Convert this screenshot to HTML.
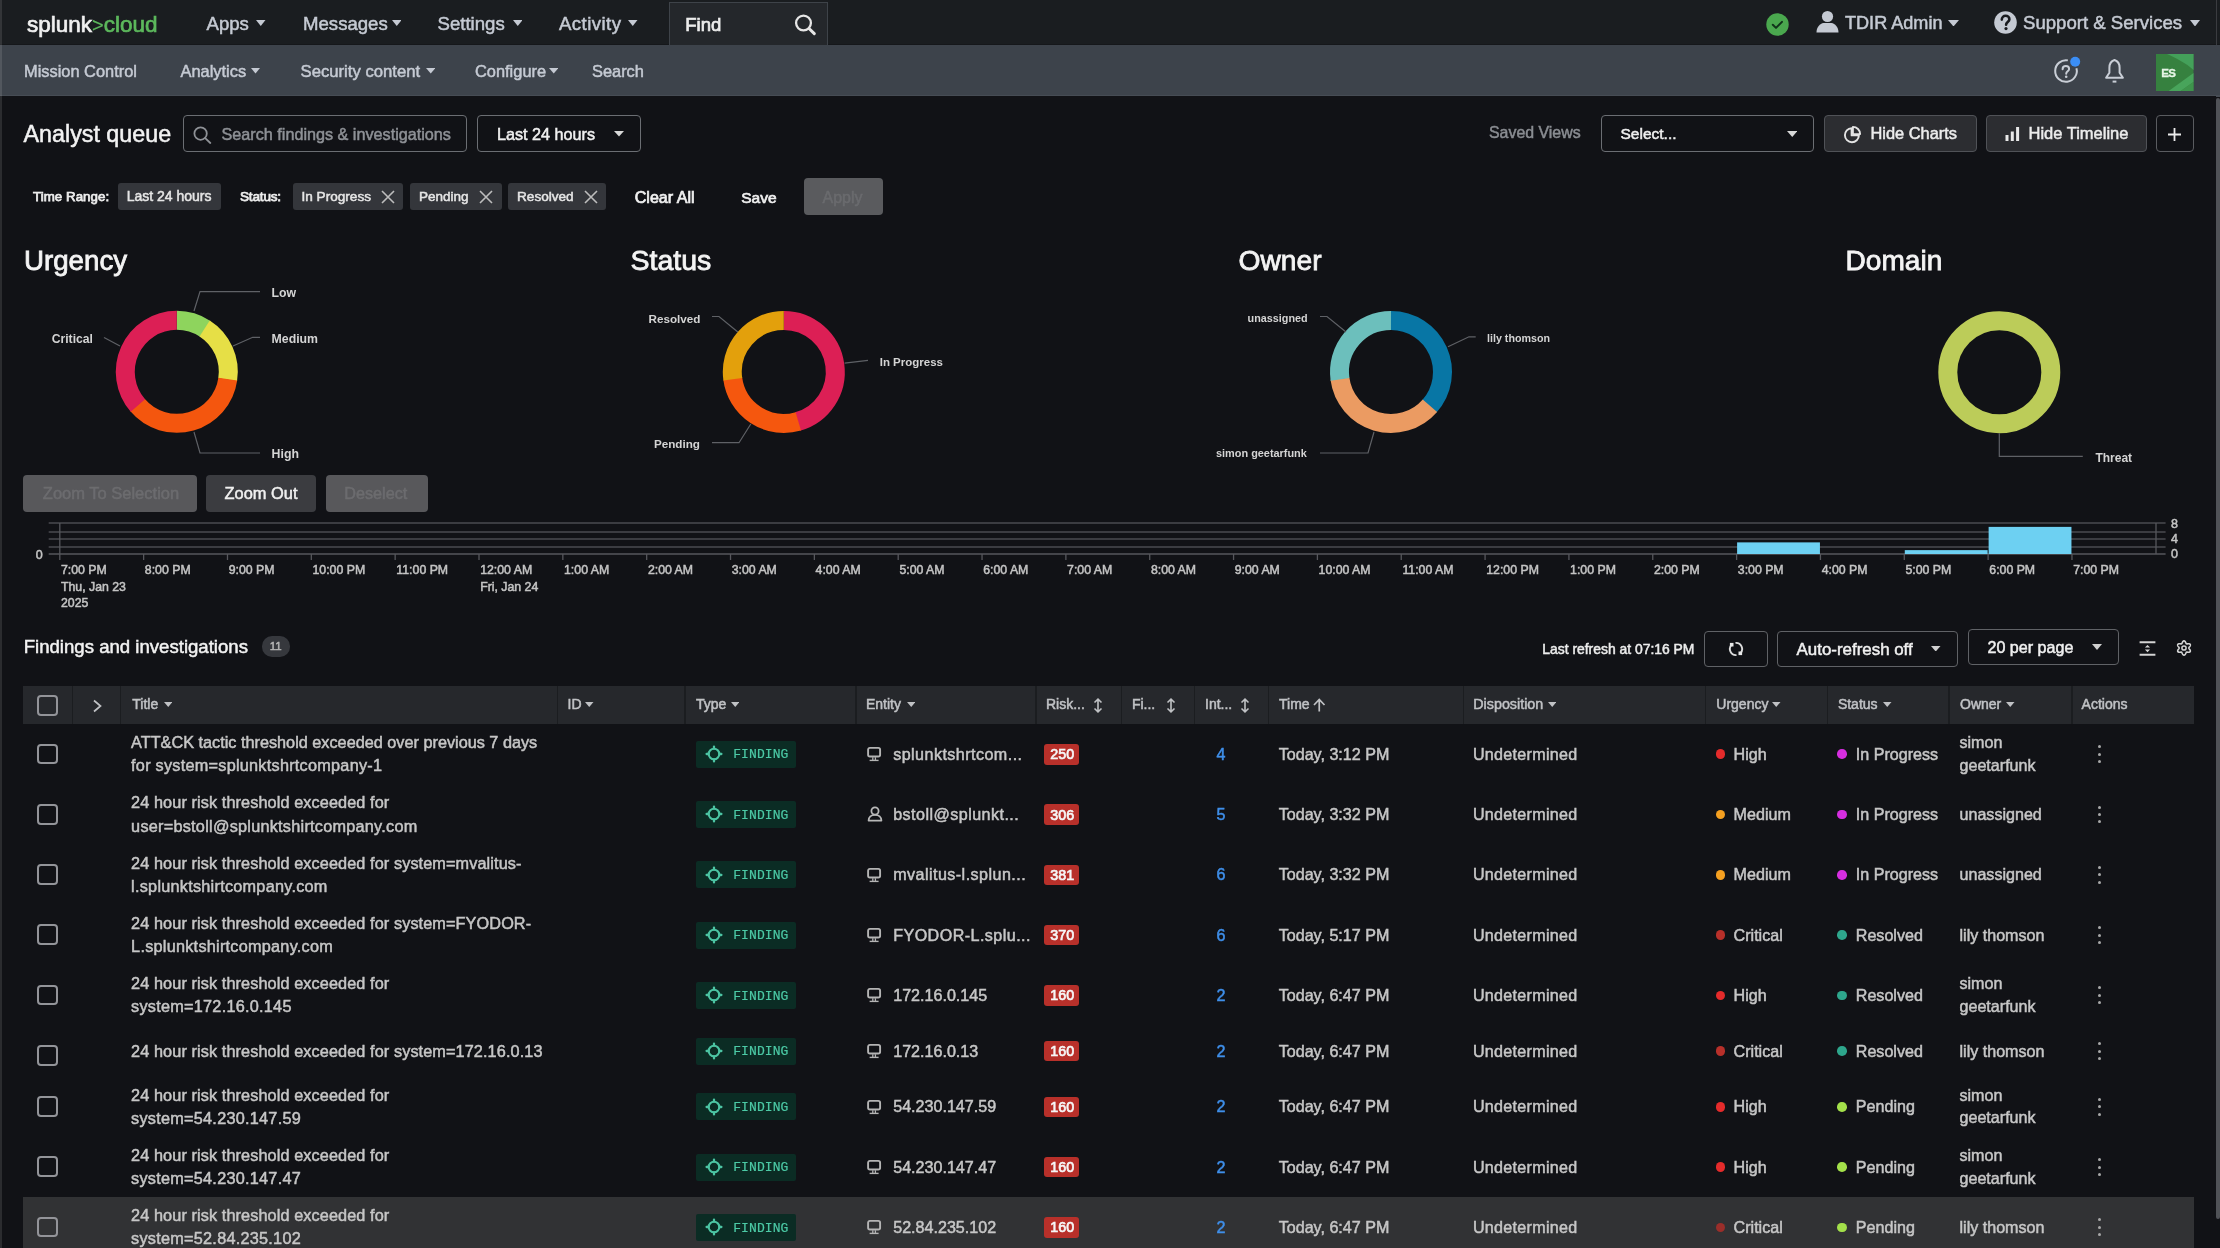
<!DOCTYPE html>
<html><head><meta charset="utf-8"><title>Analyst queue</title>
<style>
html,body{margin:0;padding:0;width:2220px;height:1248px;overflow:hidden;background:#111216;}
body{position:relative;font-family:"Liberation Sans",sans-serif;}
#root{position:absolute;left:0;top:0;width:2220px;height:1248px;will-change:transform;}
.t{position:absolute;white-space:nowrap;-webkit-text-stroke-width:0.5px;}
svg{display:block;}
</style></head><body>
<div id="root">
<div style="position:absolute;left:0px;top:0px;width:2220px;height:45px;background:#1a1d20"></div>
<div style="position:absolute;left:0px;top:45px;width:2220px;height:51px;background:#3d434b"></div>
<div style="position:absolute;left:0px;top:43.5px;width:2220px;height:1.5px;background:#15171a"></div>
<div style="position:absolute;left:0px;top:95px;width:2220px;height:1.5px;background:#464c54"></div>
<div style="position:absolute;left:2216px;top:0px;width:1px;height:45px;background:#3a3c40"></div>
<div class="t" style="left:27.00px;top:13.80px;font-size:22.5px;line-height:22.5px;color:#c8c8c8;font-weight:400;-webkit-text-stroke-width:0.7px"><span style="color:#f0f0f0">splunk</span><span style="color:#5cb85c;-webkit-text-stroke-width:0.2px;font-size:20px">&gt;</span><span style="color:#5cb85c">cloud</span></div>
<div class="t" style="left:206.50px;top:14.50px;font-size:18.6px;line-height:18.6px;color:#c5cad3;font-weight:400;">Apps</div>
<svg style="position:absolute;left:256px;top:19.5px" width="9.5" height="6" viewBox="0 0 9.5 6"><path d="M0 0H9.5L4.75 6Z" fill="#c5cad3"/></svg>
<div class="t" style="left:303.00px;top:14.50px;font-size:18.6px;line-height:18.6px;color:#c5cad3;font-weight:400;">Messages</div>
<svg style="position:absolute;left:391.5px;top:19.5px" width="9.5" height="6" viewBox="0 0 9.5 6"><path d="M0 0H9.5L4.75 6Z" fill="#c5cad3"/></svg>
<div class="t" style="left:437.50px;top:14.50px;font-size:18.6px;line-height:18.6px;color:#c5cad3;font-weight:400;">Settings</div>
<svg style="position:absolute;left:512.7px;top:19.5px" width="9.5" height="6" viewBox="0 0 9.5 6"><path d="M0 0H9.5L4.75 6Z" fill="#c5cad3"/></svg>
<div class="t" style="left:559.00px;top:14.50px;font-size:18.6px;line-height:18.6px;color:#c5cad3;font-weight:400;letter-spacing:0.45px">Activity</div>
<svg style="position:absolute;left:628px;top:19.5px" width="9.5" height="6" viewBox="0 0 9.5 6"><path d="M0 0H9.5L4.75 6Z" fill="#c5cad3"/></svg>
<div style="position:absolute;left:669px;top:1.5px;width:158.5px;height:43.5px;background:#24272b;border:1.5px solid #3e4349;box-sizing:border-box;border-bottom:none"></div>
<div class="t" style="left:685.30px;top:15.80px;font-size:18.5px;line-height:18.5px;color:#ececec;font-weight:400;-webkit-text-stroke-width:0.7px">Find</div>
<svg style="position:absolute;left:793px;top:12px;" width="26" height="26" viewBox="0 0 26 26"><circle cx="10.5" cy="11" r="7.4" stroke="#e6e6e6" stroke-width="2.3" fill="none"/><path d="M16 16.5L21.3 21.6" stroke="#e6e6e6" stroke-width="3" stroke-linecap="round"/></svg>
<svg style="position:absolute;left:1766px;top:12.5px;" width="23" height="23" viewBox="0 0 23 23"><circle cx="11.5" cy="11.5" r="11.2" fill="#4aa84e"/><path d="M6.8 11.8l3.2 3.1 6-6" stroke="#10321a" stroke-width="2" fill="none" stroke-linecap="round" stroke-linejoin="round"/></svg>
<svg style="position:absolute;left:1816px;top:10px;" width="23" height="23" viewBox="0 0 23 23"><circle cx="11.5" cy="6.5" r="5.6" fill="#c5cad3"/><path d="M0.5 22.5c0-5.5 3.5-9 7-9.5h8c3.5 0.5 7 4 7 9.5z" fill="#c5cad3"/></svg>
<div class="t" style="left:1845.00px;top:14.20px;font-size:18.1px;line-height:18.1px;color:#c5cad3;font-weight:400;">TDIR Admin</div>
<svg style="position:absolute;left:1947.5px;top:19.5px" width="11" height="6.5" viewBox="0 0 11 6.5"><path d="M0 0H11L5.5 6.5Z" fill="#c5cad3"/></svg>
<svg style="position:absolute;left:1994px;top:11px;" width="23" height="23" viewBox="0 0 23 23"><circle cx="11.5" cy="11.5" r="11.3" fill="#c5cad3"/><path d="M7.8 8.6c0-2.3 1.7-3.8 3.8-3.8s3.8 1.4 3.8 3.5c0 2.6-3.3 2.9-3.3 5.4" stroke="#1a1c20" stroke-width="2.6" fill="none" stroke-linecap="round"/><circle cx="12" cy="17.6" r="1.6" fill="#1a1c20"/></svg>
<div class="t" style="left:2023.00px;top:14.20px;font-size:18.6px;line-height:18.6px;color:#c5cad3;font-weight:400;">Support &amp; Services</div>
<svg style="position:absolute;left:2190px;top:19.5px" width="10" height="6.5" viewBox="0 0 10 6.5"><path d="M0 0H10L5.0 6.5Z" fill="#c5cad3"/></svg>
<div class="t" style="left:24.00px;top:63.40px;font-size:16.4px;line-height:16.4px;color:#c5cad3;font-weight:400;">Mission Control</div>
<div class="t" style="left:180.50px;top:63.40px;font-size:16.4px;line-height:16.4px;color:#c5cad3;font-weight:400;">Analytics</div>
<svg style="position:absolute;left:250.5px;top:68px" width="9" height="5.5" viewBox="0 0 9 5.5"><path d="M0 0H9L4.5 5.5Z" fill="#c5cad3"/></svg>
<div class="t" style="left:300.50px;top:64.40px;font-size:16.7px;line-height:16.7px;color:#c5cad3;font-weight:400;">Security content</div>
<svg style="position:absolute;left:425.5px;top:68px" width="9.5" height="5.5" viewBox="0 0 9.5 5.5"><path d="M0 0H9.5L4.75 5.5Z" fill="#c5cad3"/></svg>
<div class="t" style="left:475.00px;top:63.40px;font-size:16.4px;line-height:16.4px;color:#c5cad3;font-weight:400;">Configure</div>
<svg style="position:absolute;left:548.5px;top:68px" width="9.5" height="5.5" viewBox="0 0 9.5 5.5"><path d="M0 0H9.5L4.75 5.5Z" fill="#c5cad3"/></svg>
<div class="t" style="left:592.00px;top:63.40px;font-size:16.4px;line-height:16.4px;color:#c5cad3;font-weight:400;">Search</div>
<svg style="position:absolute;left:2052px;top:56px;" width="30" height="30" viewBox="0 0 30 30"><path d="M24.43 12.20A10.8 10.8 0 1 1 15.88 4.36" stroke="#c9ced6" stroke-width="2" fill="none"/><path d="M10.6 13.2c0-2 1.5-3.2 3.3-3.2s3.2 1.2 3.2 3c0 2.2-2.9 2.5-2.9 4.7" stroke="#c9ced6" stroke-width="2" fill="none" stroke-linecap="round"/><circle cx="14.2" cy="20.8" r="1.3" fill="#c9ced6"/><circle cx="23.2" cy="5.8" r="5" fill="#3b8ef5"/></svg>
<svg style="position:absolute;left:2103px;top:58px;" width="24" height="26" viewBox="0 0 24 26"><path d="M11.5 2C8.3 3 6.4 6 6.4 9.8V14.8L3.1 19.7H19.9L16.6 14.8V9.8C16.6 6 14.7 3 11.5 2Z" stroke="#c9ced6" stroke-width="2" fill="none" stroke-linejoin="round"/><path d="M9.6 23.6H13.4" stroke="#c9ced6" stroke-width="2"/></svg>
<svg style="position:absolute;left:2156px;top:53.5px;" width="37.5" height="37.5" viewBox="0 0 37.5 37.5"><rect width="37.5" height="37.5" fill="#36813f"/><path d="M11 0H37.5V16C30 9 20 4 11 0Z" fill="#44a05a"/><path d="M37.5 19L12 37.5H24L37.5 28Z" fill="#48a45b"/><path d="M37.5 28L24 37.5H37.5Z" fill="#3e944c"/></svg>
<div class="t" style="left:2161.20px;top:66.70px;font-size:11.6px;line-height:11.6px;color:#e6f5e6;font-weight:700;letter-spacing:-0.6px;-webkit-text-stroke-width:0.3px">ES</div>
<div style="position:absolute;left:0px;top:96px;width:2216px;height:1152px;background:#111216"></div>
<div style="position:absolute;left:2216px;top:98px;width:4px;height:1121px;background:#505257;border-radius:2px"></div>
<div class="t" style="left:23.50px;top:122.80px;font-size:23.3px;line-height:23.3px;color:#f2f2f2;font-weight:400;-webkit-text-stroke-width:0.5px">Analyst queue</div>
<div style="position:absolute;left:183px;top:115px;width:284px;height:37px;border:1.5px solid #6b6e73;border-radius:4px;box-sizing:border-box"></div>
<svg style="position:absolute;left:193px;top:126px;" width="19" height="18" viewBox="0 0 19 18"><circle cx="7.6" cy="7.6" r="6.2" stroke="#8e9196" stroke-width="1.8" fill="none"/><path d="M12.2 12.2L17.3 17" stroke="#8e9196" stroke-width="1.8" stroke-linecap="round"/></svg>
<div class="t" style="left:221.50px;top:125.60px;font-size:16.2px;line-height:16.2px;color:#8e9196;font-weight:400;">Search findings &amp; investigations</div>
<div style="position:absolute;left:477px;top:115px;width:164px;height:37px;border:1.5px solid #6b6e73;border-radius:4px;box-sizing:border-box"></div>
<div class="t" style="left:497.00px;top:125.60px;font-size:16.2px;line-height:16.2px;color:#f0f0f0;font-weight:400;">Last 24 hours</div>
<svg style="position:absolute;left:613.5px;top:131px" width="10" height="5.5" viewBox="0 0 10 5.5"><path d="M0 0H10L5.0 5.5Z" fill="#d8d8d8"/></svg>
<div class="t" style="left:1489.00px;top:125.00px;font-size:15.9px;line-height:15.9px;color:#8a8d92;font-weight:400;">Saved Views</div>
<div style="position:absolute;left:1601px;top:115px;width:213px;height:37px;border:1.5px solid #6b6e73;border-radius:4px;box-sizing:border-box"></div>
<div class="t" style="left:1620.50px;top:126.40px;font-size:15.5px;line-height:15.5px;color:#f0f0f0;font-weight:400;">Select...</div>
<svg style="position:absolute;left:1786.5px;top:131px" width="10.5" height="6" viewBox="0 0 10.5 6"><path d="M0 0H10.5L5.25 6Z" fill="#d8d8d8"/></svg>
<div style="position:absolute;left:1823.5px;top:115px;width:153px;height:37px;background:#2c2d31;border:1.5px solid #505257;border-radius:4px;box-sizing:border-box"></div>
<svg style="position:absolute;left:1842px;top:124.5px;" width="20" height="20" viewBox="0 0 20 20"><path d="M9.6 3.2A7 7 0 1 0 16.9 10.4H9.6Z" stroke="#e4e4e4" stroke-width="1.9" fill="none" stroke-linejoin="round"/><path d="M10.9 1.9V9.1H18.1A7.2 7.2 0 0 0 10.9 1.9Z" stroke="#e4e4e4" stroke-width="1.9" fill="none" stroke-linejoin="round"/></svg>
<div class="t" style="left:1870.50px;top:125.20px;font-size:16.4px;line-height:16.4px;color:#ececec;font-weight:400;">Hide Charts</div>
<div style="position:absolute;left:1986px;top:115px;width:161px;height:37px;background:#2c2d31;border:1.5px solid #505257;border-radius:4px;box-sizing:border-box"></div>
<svg style="position:absolute;left:2004.5px;top:126px;" width="16" height="15" viewBox="0 0 16 15"><rect x="0.5" y="9" width="3" height="6" fill="#e8e8e8"/><rect x="5.8" y="5.5" width="3" height="9.5" fill="#e8e8e8"/><rect x="11.1" y="1" width="3" height="14" fill="#e8e8e8"/></svg>
<div class="t" style="left:2028.50px;top:125.20px;font-size:16.5px;line-height:16.5px;color:#ececec;font-weight:400;">Hide Timeline</div>
<div style="position:absolute;left:2156px;top:115px;width:37.5px;height:37px;border:1.5px solid #5a5c60;border-radius:4px;box-sizing:border-box"></div>
<svg style="position:absolute;left:2167px;top:127px;" width="15" height="15" viewBox="0 0 15 15"><path d="M7.5 1V14M1 7.5H14" stroke="#ececec" stroke-width="1.8"/></svg>
<div class="t" style="left:33.00px;top:190.20px;font-size:13.3px;line-height:13.3px;color:#ececec;font-weight:400;-webkit-text-stroke-width:0.75px;letter-spacing:0.05px">Time Range:</div>
<div style="position:absolute;left:117.5px;top:183px;width:103.5px;height:27px;background:#34363b;border-radius:3px"></div>
<div class="t" style="left:126.70px;top:189.00px;font-size:14px;line-height:14px;color:#e6e6e6;font-weight:400;">Last 24 hours</div>
<div class="t" style="left:240.00px;top:190.20px;font-size:13.6px;line-height:13.6px;color:#ececec;font-weight:400;-webkit-text-stroke-width:0.75px;letter-spacing:-0.2px">Status:</div>
<div style="position:absolute;left:292.5px;top:183px;width:110.5px;height:27px;background:#34363b;border-radius:3px"></div>
<div class="t" style="left:301.50px;top:190.00px;font-size:13.6px;line-height:13.6px;color:#e6e6e6;font-weight:400;">In Progress</div>
<svg style="position:absolute;left:381px;top:189.5px;" width="14" height="14" viewBox="0 0 14 14"><path d="M1 1L13 13M13 1L1 13" stroke="#bdbdbd" stroke-width="1.6"/></svg>
<div style="position:absolute;left:409.5px;top:183px;width:92.5px;height:27px;background:#34363b;border-radius:3px"></div>
<div class="t" style="left:419.00px;top:190.00px;font-size:13.5px;line-height:13.5px;color:#e6e6e6;font-weight:400;">Pending</div>
<svg style="position:absolute;left:478.5px;top:189.5px;" width="14" height="14" viewBox="0 0 14 14"><path d="M1 1L13 13M13 1L1 13" stroke="#bdbdbd" stroke-width="1.6"/></svg>
<div style="position:absolute;left:508px;top:183px;width:98px;height:27px;background:#34363b;border-radius:3px"></div>
<div class="t" style="left:517.00px;top:190.00px;font-size:13.6px;line-height:13.6px;color:#e6e6e6;font-weight:400;">Resolved</div>
<svg style="position:absolute;left:584px;top:189.5px;" width="14" height="14" viewBox="0 0 14 14"><path d="M1 1L13 13M13 1L1 13" stroke="#bdbdbd" stroke-width="1.6"/></svg>
<div class="t" style="left:634.70px;top:188.70px;font-size:16.1px;line-height:16.1px;color:#f0f0f0;font-weight:400;-webkit-text-stroke-width:0.7px">Clear All</div>
<div class="t" style="left:741.20px;top:189.70px;font-size:15.5px;line-height:15.5px;color:#f0f0f0;font-weight:400;-webkit-text-stroke-width:0.7px">Save</div>
<div style="position:absolute;left:804.3px;top:178.3px;width:79px;height:36.3px;background:#5a5b5e;border-radius:4px"></div>
<div class="t" style="left:822.50px;top:189.70px;font-size:16px;line-height:16px;color:#6a6b6e;font-weight:400;">Apply</div>
<div class="t" style="left:24.00px;top:246.50px;font-size:27.7px;line-height:27.7px;color:#f4f4f4;font-weight:400;-webkit-text-stroke-width:0.8px">Urgency</div>
<div class="t" style="left:630.50px;top:245.50px;font-size:28.5px;line-height:28.5px;color:#f4f4f4;font-weight:400;-webkit-text-stroke-width:0.8px">Status</div>
<div class="t" style="left:1238.50px;top:245.50px;font-size:28.2px;line-height:28.2px;color:#f4f4f4;font-weight:400;-webkit-text-stroke-width:0.8px">Owner</div>
<div class="t" style="left:1845.50px;top:246.50px;font-size:28.1px;line-height:28.1px;color:#f4f4f4;font-weight:400;-webkit-text-stroke-width:0.8px">Domain</div>
<svg style="position:absolute;left:0;top:0" width="2220" height="1248" viewBox="0 0 2220 1248"><path d="M176.80 320.30A51.5 51.5 0 0 1 205.25 328.87" stroke="#8ed45d" stroke-width="19" fill="none"/><path d="M204.64 328.48A51.5 51.5 0 0 1 227.67 379.84" stroke="#e6df46" stroke-width="19" fill="none"/><path d="M227.78 379.13A51.5 51.5 0 0 1 137.41 404.98" stroke="#f4560e" stroke-width="19" fill="none"/><path d="M137.88 405.53A51.5 51.5 0 0 1 176.80 320.30" stroke="#dc1f55" stroke-width="19" fill="none"/><path d="M783.80 320.40A51.5 51.5 0 0 1 797.62 421.51" stroke="#dc1f55" stroke-width="19" fill="none"/><path d="M798.31 421.31A51.5 51.5 0 0 1 732.73 378.52" stroke="#f5570e" stroke-width="19" fill="none"/><path d="M732.82 379.23A51.5 51.5 0 0 1 783.80 320.40" stroke="#e3a00c" stroke-width="19" fill="none"/><path d="M1391.00 320.50A51.5 51.5 0 0 1 1429.45 406.27" stroke="#0876a5" stroke-width="19" fill="none"/><path d="M1429.92 405.73A51.5 51.5 0 0 1 1339.93 378.62" stroke="#eb9b62" stroke-width="19" fill="none"/><path d="M1340.02 379.33A51.5 51.5 0 0 1 1391.00 320.50" stroke="#6cbfbc" stroke-width="19" fill="none"/><circle cx="1999.3" cy="372.2" r="51.5" stroke="#bccc59" stroke-width="19" fill="none"/><polyline points="194,311 200,291.6 260,291.6" stroke="#5f6166" stroke-width="1.2" fill="none"/><polyline points="233,346 252.7,337.3 260,337.3" stroke="#5f6166" stroke-width="1.2" fill="none"/><polyline points="194,432 200,453 260,453" stroke="#5f6166" stroke-width="1.2" fill="none"/><polyline points="120,346 104,337.5" stroke="#5f6166" stroke-width="1.2" fill="none"/><polyline points="712,316.5 719,316.5 737.8,332" stroke="#5f6166" stroke-width="1.2" fill="none"/><polyline points="844.6,363.2 868,360.3" stroke="#5f6166" stroke-width="1.2" fill="none"/><polyline points="712,442.7 739,442.7 750.8,424" stroke="#5f6166" stroke-width="1.2" fill="none"/><polyline points="1320,316.5 1327,316.5 1346,332" stroke="#5f6166" stroke-width="1.2" fill="none"/><polyline points="1448,346.8 1469,336.8 1475.7,336.8" stroke="#5f6166" stroke-width="1.2" fill="none"/><polyline points="1320,453 1368,453 1374,432" stroke="#5f6166" stroke-width="1.2" fill="none"/><polyline points="1999.3,433.3 1999.3,456.3 2082.8,456.3" stroke="#5f6166" stroke-width="1.2" fill="none"/><line x1="48.7" y1="523" x2="2165.6" y2="523" stroke="#4a4b50" stroke-width="1.3"/><line x1="48.7" y1="532" x2="2165.6" y2="532" stroke="#4a4b50" stroke-width="1.3"/><line x1="48.7" y1="539" x2="2165.6" y2="539" stroke="#4a4b50" stroke-width="1.3"/><line x1="48.7" y1="547" x2="2165.6" y2="547" stroke="#4a4b50" stroke-width="1.3"/><line x1="48.7" y1="554" x2="2165.6" y2="554" stroke="#56575c" stroke-width="1.3"/><line x1="59.8" y1="523" x2="59.8" y2="560" stroke="#56575c" stroke-width="1.3"/><line x1="2156" y1="523" x2="2156" y2="554" stroke="#56575c" stroke-width="1.3"/><line x1="143.64" y1="554" x2="143.64" y2="560" stroke="#56575c" stroke-width="1.3"/><line x1="227.48" y1="554" x2="227.48" y2="560" stroke="#56575c" stroke-width="1.3"/><line x1="311.32" y1="554" x2="311.32" y2="560" stroke="#56575c" stroke-width="1.3"/><line x1="395.16" y1="554" x2="395.16" y2="560" stroke="#56575c" stroke-width="1.3"/><line x1="479.00" y1="554" x2="479.00" y2="560" stroke="#56575c" stroke-width="1.3"/><line x1="562.84" y1="554" x2="562.84" y2="560" stroke="#56575c" stroke-width="1.3"/><line x1="646.68" y1="554" x2="646.68" y2="560" stroke="#56575c" stroke-width="1.3"/><line x1="730.52" y1="554" x2="730.52" y2="560" stroke="#56575c" stroke-width="1.3"/><line x1="814.36" y1="554" x2="814.36" y2="560" stroke="#56575c" stroke-width="1.3"/><line x1="898.20" y1="554" x2="898.20" y2="560" stroke="#56575c" stroke-width="1.3"/><line x1="982.04" y1="554" x2="982.04" y2="560" stroke="#56575c" stroke-width="1.3"/><line x1="1065.88" y1="554" x2="1065.88" y2="560" stroke="#56575c" stroke-width="1.3"/><line x1="1149.72" y1="554" x2="1149.72" y2="560" stroke="#56575c" stroke-width="1.3"/><line x1="1233.56" y1="554" x2="1233.56" y2="560" stroke="#56575c" stroke-width="1.3"/><line x1="1317.40" y1="554" x2="1317.40" y2="560" stroke="#56575c" stroke-width="1.3"/><line x1="1401.24" y1="554" x2="1401.24" y2="560" stroke="#56575c" stroke-width="1.3"/><line x1="1485.08" y1="554" x2="1485.08" y2="560" stroke="#56575c" stroke-width="1.3"/><line x1="1568.92" y1="554" x2="1568.92" y2="560" stroke="#56575c" stroke-width="1.3"/><line x1="1652.76" y1="554" x2="1652.76" y2="560" stroke="#56575c" stroke-width="1.3"/><line x1="1736.60" y1="554" x2="1736.60" y2="560" stroke="#56575c" stroke-width="1.3"/><line x1="1820.44" y1="554" x2="1820.44" y2="560" stroke="#56575c" stroke-width="1.3"/><line x1="1904.28" y1="554" x2="1904.28" y2="560" stroke="#56575c" stroke-width="1.3"/><line x1="1988.12" y1="554" x2="1988.12" y2="560" stroke="#56575c" stroke-width="1.3"/><line x1="2071.96" y1="554" x2="2071.96" y2="560" stroke="#56575c" stroke-width="1.3"/><rect x="1737.10" y="542.38" width="82.84" height="11.62" fill="#6dd0f2"/><rect x="1904.78" y="550.12" width="82.84" height="3.88" fill="#6dd0f2"/><rect x="1988.62" y="526.88" width="82.84" height="27.12" fill="#6dd0f2"/></svg>
<div class="t" style="left:271.60px;top:287.00px;font-size:12.3px;line-height:12.3px;color:#d4d4d4;font-weight:700;-webkit-text-stroke-width:0;">Low</div>
<div class="t" style="left:271.60px;top:332.50px;font-size:12.3px;line-height:12.3px;color:#d4d4d4;font-weight:700;-webkit-text-stroke-width:0;">Medium</div>
<div class="t" style="left:271.60px;top:448.00px;font-size:12.3px;line-height:12.3px;color:#d4d4d4;font-weight:700;-webkit-text-stroke-width:0;">High</div>
<div class="t" style="right:2127.00px;text-align:right;top:332.50px;font-size:12.2px;line-height:12.2px;color:#d4d4d4;font-weight:700;-webkit-text-stroke-width:0;">Critical</div>
<div class="t" style="right:1519.50px;text-align:right;top:312.50px;font-size:11.7px;line-height:11.7px;color:#d4d4d4;font-weight:700;-webkit-text-stroke-width:0;">Resolved</div>
<div class="t" style="left:879.70px;top:356.80px;font-size:11.5px;line-height:11.5px;color:#d4d4d4;font-weight:700;-webkit-text-stroke-width:0;">In Progress</div>
<div class="t" style="right:1520.00px;text-align:right;top:437.80px;font-size:11.7px;line-height:11.7px;color:#d4d4d4;font-weight:700;-webkit-text-stroke-width:0;">Pending</div>
<div class="t" style="right:912.40px;text-align:right;top:313.00px;font-size:10.8px;line-height:10.8px;color:#d4d4d4;font-weight:700;-webkit-text-stroke-width:0;">unassigned</div>
<div class="t" style="left:1487.00px;top:332.50px;font-size:10.7px;line-height:10.7px;color:#d4d4d4;font-weight:700;-webkit-text-stroke-width:0;">lily thomson</div>
<div class="t" style="right:913.20px;text-align:right;top:448.00px;font-size:10.9px;line-height:10.9px;color:#d4d4d4;font-weight:700;-webkit-text-stroke-width:0;">simon geetarfunk</div>
<div class="t" style="left:2095.40px;top:451.50px;font-size:12px;line-height:12px;color:#d4d4d4;font-weight:700;-webkit-text-stroke-width:0;">Threat</div>
<div style="position:absolute;left:23px;top:475px;width:174px;height:36.6px;background:#58585b;border-radius:4px"></div>
<div class="t" style="left:42.80px;top:484.60px;font-size:16.5px;line-height:16.5px;color:#6c6c6f;font-weight:400;">Zoom To Selection</div>
<div style="position:absolute;left:206.4px;top:475px;width:110px;height:36.6px;background:#3b3c40;border-radius:4px"></div>
<div class="t" style="left:224.60px;top:484.60px;font-size:16.4px;line-height:16.4px;color:#f0f0f0;font-weight:400;">Zoom Out</div>
<div style="position:absolute;left:326px;top:475px;width:101.5px;height:36.6px;background:#58585b;border-radius:4px"></div>
<div class="t" style="left:344.30px;top:484.60px;font-size:16.2px;line-height:16.2px;color:#6c6c6f;font-weight:400;">Deselect</div>
<div class="t" style="left:35.80px;top:548.50px;font-size:12.5px;line-height:12.5px;color:#c4c4c4;font-weight:400;">0</div>
<div class="t" style="left:2171.00px;top:518.00px;font-size:12.5px;line-height:12.5px;color:#c4c4c4;font-weight:400;">8</div>
<div class="t" style="left:2171.00px;top:533.00px;font-size:12.5px;line-height:12.5px;color:#c4c4c4;font-weight:400;">4</div>
<div class="t" style="left:2171.00px;top:548.00px;font-size:12.5px;line-height:12.5px;color:#c4c4c4;font-weight:400;">0</div>
<div class="t" style="left:61.00px;top:564.40px;font-size:12.3px;line-height:12.3px;color:#c4c4c4;font-weight:400;">7:00 PM</div>
<div class="t" style="left:144.84px;top:564.40px;font-size:12.3px;line-height:12.3px;color:#c4c4c4;font-weight:400;">8:00 PM</div>
<div class="t" style="left:228.68px;top:564.40px;font-size:12.3px;line-height:12.3px;color:#c4c4c4;font-weight:400;">9:00 PM</div>
<div class="t" style="left:312.52px;top:564.40px;font-size:12.3px;line-height:12.3px;color:#c4c4c4;font-weight:400;">10:00 PM</div>
<div class="t" style="left:396.36px;top:564.40px;font-size:12.3px;line-height:12.3px;color:#c4c4c4;font-weight:400;">11:00 PM</div>
<div class="t" style="left:480.20px;top:564.40px;font-size:12.3px;line-height:12.3px;color:#c4c4c4;font-weight:400;">12:00 AM</div>
<div class="t" style="left:564.04px;top:564.40px;font-size:12.3px;line-height:12.3px;color:#c4c4c4;font-weight:400;">1:00 AM</div>
<div class="t" style="left:647.88px;top:564.40px;font-size:12.3px;line-height:12.3px;color:#c4c4c4;font-weight:400;">2:00 AM</div>
<div class="t" style="left:731.72px;top:564.40px;font-size:12.3px;line-height:12.3px;color:#c4c4c4;font-weight:400;">3:00 AM</div>
<div class="t" style="left:815.56px;top:564.40px;font-size:12.3px;line-height:12.3px;color:#c4c4c4;font-weight:400;">4:00 AM</div>
<div class="t" style="left:899.40px;top:564.40px;font-size:12.3px;line-height:12.3px;color:#c4c4c4;font-weight:400;">5:00 AM</div>
<div class="t" style="left:983.24px;top:564.40px;font-size:12.3px;line-height:12.3px;color:#c4c4c4;font-weight:400;">6:00 AM</div>
<div class="t" style="left:1067.08px;top:564.40px;font-size:12.3px;line-height:12.3px;color:#c4c4c4;font-weight:400;">7:00 AM</div>
<div class="t" style="left:1150.92px;top:564.40px;font-size:12.3px;line-height:12.3px;color:#c4c4c4;font-weight:400;">8:00 AM</div>
<div class="t" style="left:1234.76px;top:564.40px;font-size:12.3px;line-height:12.3px;color:#c4c4c4;font-weight:400;">9:00 AM</div>
<div class="t" style="left:1318.60px;top:564.40px;font-size:12.3px;line-height:12.3px;color:#c4c4c4;font-weight:400;">10:00 AM</div>
<div class="t" style="left:1402.44px;top:564.40px;font-size:12.3px;line-height:12.3px;color:#c4c4c4;font-weight:400;">11:00 AM</div>
<div class="t" style="left:1486.28px;top:564.40px;font-size:12.3px;line-height:12.3px;color:#c4c4c4;font-weight:400;">12:00 PM</div>
<div class="t" style="left:1570.12px;top:564.40px;font-size:12.3px;line-height:12.3px;color:#c4c4c4;font-weight:400;">1:00 PM</div>
<div class="t" style="left:1653.96px;top:564.40px;font-size:12.3px;line-height:12.3px;color:#c4c4c4;font-weight:400;">2:00 PM</div>
<div class="t" style="left:1737.80px;top:564.40px;font-size:12.3px;line-height:12.3px;color:#c4c4c4;font-weight:400;">3:00 PM</div>
<div class="t" style="left:1821.64px;top:564.40px;font-size:12.3px;line-height:12.3px;color:#c4c4c4;font-weight:400;">4:00 PM</div>
<div class="t" style="left:1905.48px;top:564.40px;font-size:12.3px;line-height:12.3px;color:#c4c4c4;font-weight:400;">5:00 PM</div>
<div class="t" style="left:1989.32px;top:564.40px;font-size:12.3px;line-height:12.3px;color:#c4c4c4;font-weight:400;">6:00 PM</div>
<div class="t" style="left:2073.16px;top:564.40px;font-size:12.3px;line-height:12.3px;color:#c4c4c4;font-weight:400;">7:00 PM</div>
<div class="t" style="left:61.00px;top:580.80px;font-size:12.3px;line-height:12.3px;color:#c4c4c4;font-weight:400;">Thu, Jan 23</div>
<div class="t" style="left:61.00px;top:597.00px;font-size:12.3px;line-height:12.3px;color:#c4c4c4;font-weight:400;">2025</div>
<div class="t" style="left:480.20px;top:580.80px;font-size:12.3px;line-height:12.3px;color:#c4c4c4;font-weight:400;">Fri, Jan 24</div>
<div class="t" style="left:23.70px;top:637.60px;font-size:18.6px;line-height:18.6px;color:#f2f2f2;font-weight:400;">Findings and investigations</div>
<div style="position:absolute;left:262px;top:636px;width:27.7px;height:20.5px;background:#36383d;border-radius:10px"></div>
<div class="t" style="left:269.80px;top:641.20px;font-size:11.5px;line-height:11.5px;color:#b4b4b4;font-weight:400;">11</div>
<div class="t" style="left:1542.30px;top:642.70px;font-size:13.9px;line-height:13.9px;color:#ececec;font-weight:400;">Last refresh at 07:16 PM</div>
<div style="position:absolute;left:1704.4px;top:630.5px;width:63.5px;height:36.5px;border:1.5px solid #606266;border-radius:4px;box-sizing:border-box"></div>
<svg style="position:absolute;left:1727.7px;top:640.9px;" width="16" height="16" viewBox="0 0 16 16"><path d="M3.69 3.69A6.1 6.1 0 0 0 8.53 14.08" stroke="#dcdcdc" stroke-width="1.9" fill="none"/><path d="M7.47 1.92A6.1 6.1 0 0 1 12.31 12.31" stroke="#dcdcdc" stroke-width="1.9" fill="none"/><rect x="1.9" y="1.9" width="3.6" height="3.6" fill="#e8e8e8"/><rect x="10.5" y="10.5" width="3.6" height="3.6" fill="#e8e8e8"/></svg>
<div style="position:absolute;left:1777.4px;top:630.5px;width:180.3px;height:36.5px;border:1.5px solid #606266;border-radius:4px;box-sizing:border-box"></div>
<div class="t" style="left:1796.60px;top:641.70px;font-size:16.9px;line-height:16.9px;color:#f0f0f0;font-weight:400;">Auto-refresh off</div>
<svg style="position:absolute;left:1931.4px;top:645.5px" width="9.5" height="5.5" viewBox="0 0 9.5 5.5"><path d="M0 0H9.5L4.75 5.5Z" fill="#d0d0d0"/></svg>
<div style="position:absolute;left:1967.6px;top:629.1px;width:151.1px;height:36.3px;border:1.5px solid #606266;border-radius:4px;box-sizing:border-box"></div>
<div class="t" style="left:1987.50px;top:639.10px;font-size:16.1px;line-height:16.1px;color:#f0f0f0;font-weight:400;">20 per page</div>
<svg style="position:absolute;left:2092px;top:644.3px" width="10" height="6" viewBox="0 0 10 6"><path d="M0 0H10L5.0 6Z" fill="#d0d0d0"/></svg>
<svg style="position:absolute;left:2138.5px;top:641px;" width="17" height="15" viewBox="0 0 17 15"><path d="M0.6 1.3H16.4M0.6 13.8H16.4" stroke="#d4d4d4" stroke-width="2"/><path d="M5.9 6.6L8.5 4L11.1 6.6Z M5.9 8.6L8.5 11.2L11.1 8.6Z" fill="#d4d4d4"/></svg>
<svg style="position:absolute;left:2176px;top:640.4px;" width="16" height="16" viewBox="0 0 16 16"><polygon points="8.00,0.85 8.25,0.88 8.49,0.97 8.72,1.11 8.94,1.30 9.14,1.52 9.32,1.78 9.48,2.06 9.62,2.35 9.74,2.63 9.86,2.90 9.96,3.15 10.06,3.37 10.17,3.55 10.29,3.70 10.42,3.80 10.58,3.87 10.77,3.90 10.98,3.90 11.22,3.88 11.49,3.84 11.78,3.81 12.08,3.77 12.40,3.75 12.72,3.75 13.04,3.77 13.33,3.83 13.61,3.93 13.85,4.06 14.04,4.22 14.19,4.42 14.29,4.66 14.34,4.91 14.33,5.18 14.28,5.46 14.18,5.75 14.04,6.04 13.88,6.31 13.71,6.58 13.52,6.83 13.34,7.06 13.18,7.27 13.04,7.47 12.94,7.65 12.87,7.83 12.85,8.00 12.87,8.17 12.94,8.35 13.04,8.53 13.18,8.73 13.34,8.94 13.52,9.17 13.71,9.42 13.88,9.69 14.04,9.96 14.18,10.25 14.28,10.54 14.33,10.82 14.34,11.09 14.29,11.34 14.19,11.57 14.04,11.78 13.85,11.94 13.61,12.07 13.33,12.17 13.04,12.23 12.72,12.25 12.40,12.25 12.08,12.23 11.78,12.19 11.49,12.16 11.22,12.12 10.98,12.10 10.77,12.10 10.58,12.13 10.42,12.20 10.29,12.30 10.17,12.45 10.06,12.63 9.96,12.85 9.86,13.10 9.74,13.37 9.62,13.65 9.48,13.94 9.32,14.22 9.14,14.48 8.94,14.70 8.72,14.89 8.49,15.03 8.25,15.12 8.00,15.15 7.75,15.12 7.51,15.03 7.28,14.89 7.06,14.70 6.86,14.48 6.68,14.22 6.52,13.94 6.38,13.65 6.26,13.37 6.14,13.10 6.04,12.85 5.94,12.63 5.83,12.45 5.71,12.30 5.57,12.20 5.42,12.13 5.23,12.10 5.02,12.10 4.78,12.12 4.51,12.16 4.22,12.19 3.92,12.23 3.60,12.25 3.28,12.25 2.96,12.23 2.67,12.17 2.39,12.07 2.15,11.94 1.96,11.78 1.81,11.58 1.71,11.34 1.66,11.09 1.67,10.82 1.72,10.54 1.82,10.25 1.96,9.96 2.12,9.69 2.29,9.42 2.48,9.17 2.66,8.94 2.82,8.73 2.96,8.53 3.06,8.35 3.13,8.17 3.15,8.00 3.13,7.83 3.06,7.65 2.96,7.47 2.82,7.27 2.66,7.06 2.48,6.83 2.29,6.58 2.12,6.31 1.96,6.04 1.82,5.75 1.72,5.46 1.67,5.18 1.66,4.91 1.71,4.66 1.81,4.42 1.96,4.22 2.15,4.06 2.39,3.93 2.67,3.83 2.96,3.77 3.28,3.75 3.60,3.75 3.92,3.77 4.22,3.81 4.51,3.84 4.78,3.88 5.02,3.90 5.23,3.90 5.42,3.87 5.57,3.80 5.71,3.70 5.83,3.55 5.94,3.37 6.04,3.15 6.14,2.90 6.26,2.63 6.38,2.35 6.52,2.06 6.68,1.78 6.86,1.52 7.06,1.30 7.28,1.11 7.51,0.97 7.75,0.88" stroke="#d4d4d4" stroke-width="1.6" fill="none" stroke-linejoin="round"/><circle cx="8" cy="8" r="2.1" stroke="#d4d4d4" stroke-width="1.5" fill="none"/></svg>
<div style="position:absolute;left:23px;top:685.8px;width:2170.5px;height:38px;background:#26282c"></div>
<div style="position:absolute;left:71.65px;top:685.8px;width:1.5px;height:38px;background:#1b1d20"></div>
<div style="position:absolute;left:119.65px;top:685.8px;width:1.5px;height:38px;background:#1b1d20"></div>
<div style="position:absolute;left:556.75px;top:685.8px;width:1.5px;height:38px;background:#1b1d20"></div>
<div style="position:absolute;left:684.35px;top:685.8px;width:1.5px;height:38px;background:#1b1d20"></div>
<div style="position:absolute;left:855.15px;top:685.8px;width:1.5px;height:38px;background:#1b1d20"></div>
<div style="position:absolute;left:1035.45px;top:685.8px;width:1.5px;height:38px;background:#1b1d20"></div>
<div style="position:absolute;left:1120.75px;top:685.8px;width:1.5px;height:38px;background:#1b1d20"></div>
<div style="position:absolute;left:1193.95px;top:685.8px;width:1.5px;height:38px;background:#1b1d20"></div>
<div style="position:absolute;left:1267.95px;top:685.8px;width:1.5px;height:38px;background:#1b1d20"></div>
<div style="position:absolute;left:1462.85px;top:685.8px;width:1.5px;height:38px;background:#1b1d20"></div>
<div style="position:absolute;left:1704.95px;top:685.8px;width:1.5px;height:38px;background:#1b1d20"></div>
<div style="position:absolute;left:1826.55px;top:685.8px;width:1.5px;height:38px;background:#1b1d20"></div>
<div style="position:absolute;left:1948.35px;top:685.8px;width:1.5px;height:38px;background:#1b1d20"></div>
<div style="position:absolute;left:2071.25px;top:685.8px;width:1.5px;height:38px;background:#1b1d20"></div>
<div style="position:absolute;left:37.4px;top:695.1px;width:20.8px;height:20.8px;border:2px solid #939499;border-radius:4px;box-sizing:border-box"></div>
<svg style="position:absolute;left:92px;top:699px;" width="11" height="14" viewBox="0 0 11 14"><path d="M2 1.5L8.5 7L2 12.5" stroke="#c0c2c5" stroke-width="1.7" fill="none"/></svg>
<div class="t" style="left:132.30px;top:697.30px;font-size:14px;line-height:14px;color:#c0c2c5;font-weight:400;">Title</div>
<svg style="position:absolute;left:163.6px;top:701.8px" width="8.5" height="5" viewBox="0 0 8.5 5"><path d="M0 0H8.5L4.25 5Z" fill="#c0c2c5"/></svg>
<div class="t" style="left:567.60px;top:697.30px;font-size:14px;line-height:14px;color:#c0c2c5;font-weight:400;">ID</div>
<svg style="position:absolute;left:585px;top:701.8px" width="8.5" height="5" viewBox="0 0 8.5 5"><path d="M0 0H8.5L4.25 5Z" fill="#c0c2c5"/></svg>
<div class="t" style="left:696.00px;top:697.30px;font-size:14px;line-height:14px;color:#c0c2c5;font-weight:400;">Type</div>
<svg style="position:absolute;left:730.5px;top:701.8px" width="8.5" height="5" viewBox="0 0 8.5 5"><path d="M0 0H8.5L4.25 5Z" fill="#c0c2c5"/></svg>
<div class="t" style="left:866.00px;top:697.30px;font-size:14px;line-height:14px;color:#c0c2c5;font-weight:400;">Entity</div>
<svg style="position:absolute;left:906.5px;top:701.8px" width="8.5" height="5" viewBox="0 0 8.5 5"><path d="M0 0H8.5L4.25 5Z" fill="#c0c2c5"/></svg>
<div class="t" style="left:1046.00px;top:697.30px;font-size:14px;line-height:14px;color:#c0c2c5;font-weight:400;">Risk...</div>
<svg style="position:absolute;left:1093px;top:697.5px;" width="10" height="15" viewBox="0 0 10 15"><path d="M5 1.5V13.5M1.5 4.5L5 1.2L8.5 4.5M1.5 10.5L5 13.8L8.5 10.5" stroke="#c0c2c5" stroke-width="1.6" fill="none"/></svg>
<div class="t" style="left:1131.90px;top:697.30px;font-size:14px;line-height:14px;color:#c0c2c5;font-weight:400;">Fi...</div>
<svg style="position:absolute;left:1166px;top:697.5px;" width="10" height="15" viewBox="0 0 10 15"><path d="M5 1.5V13.5M1.5 4.5L5 1.2L8.5 4.5M1.5 10.5L5 13.8L8.5 10.5" stroke="#c0c2c5" stroke-width="1.6" fill="none"/></svg>
<div class="t" style="left:1205.00px;top:697.30px;font-size:14px;line-height:14px;color:#c0c2c5;font-weight:400;">Int...</div>
<svg style="position:absolute;left:1240.3px;top:697.5px;" width="10" height="15" viewBox="0 0 10 15"><path d="M5 1.5V13.5M1.5 4.5L5 1.2L8.5 4.5M1.5 10.5L5 13.8L8.5 10.5" stroke="#c0c2c5" stroke-width="1.6" fill="none"/></svg>
<div class="t" style="left:1279.00px;top:697.30px;font-size:14px;line-height:14px;color:#c0c2c5;font-weight:400;">Time</div>
<svg style="position:absolute;left:1313px;top:697.5px;" width="12.5" height="14" viewBox="0 0 12.5 14"><path d="M6.25 13.5V1.8M1 7L6.25 1.5L11.5 7" stroke="#c0c2c5" stroke-width="1.7" fill="none"/></svg>
<div class="t" style="left:1473.30px;top:697.30px;font-size:14.3px;line-height:14.3px;color:#c0c2c5;font-weight:400;">Disposition</div>
<svg style="position:absolute;left:1547.5px;top:701.8px" width="8.5" height="5" viewBox="0 0 8.5 5"><path d="M0 0H8.5L4.25 5Z" fill="#c0c2c5"/></svg>
<div class="t" style="left:1716.30px;top:697.30px;font-size:14px;line-height:14px;color:#c0c2c5;font-weight:400;">Urgency</div>
<svg style="position:absolute;left:1772px;top:701.8px" width="8.5" height="5" viewBox="0 0 8.5 5"><path d="M0 0H8.5L4.25 5Z" fill="#c0c2c5"/></svg>
<div class="t" style="left:1837.90px;top:697.30px;font-size:14px;line-height:14px;color:#c0c2c5;font-weight:400;">Status</div>
<svg style="position:absolute;left:1883px;top:701.8px" width="8.5" height="5" viewBox="0 0 8.5 5"><path d="M0 0H8.5L4.25 5Z" fill="#c0c2c5"/></svg>
<div class="t" style="left:1960.00px;top:697.30px;font-size:14px;line-height:14px;color:#c0c2c5;font-weight:400;">Owner</div>
<svg style="position:absolute;left:2006px;top:701.8px" width="8.5" height="5" viewBox="0 0 8.5 5"><path d="M0 0H8.5L4.25 5Z" fill="#c0c2c5"/></svg>
<div class="t" style="left:2081.60px;top:697.30px;font-size:14px;line-height:14px;color:#c0c2c5;font-weight:400;">Actions</div>
<div style="position:absolute;left:37.2px;top:743.5px;width:20.8px;height:20.8px;border:2px solid #939499;border-radius:4px;box-sizing:border-box"></div>
<div class="t" style="left:131.10px;top:734.10px;font-size:16.25px;line-height:16.25px;color:#c6c6c6;font-weight:400;">ATT&amp;CK tactic threshold exceeded over previous 7 days</div>
<div class="t" style="left:131.10px;top:757.20px;font-size:16.25px;line-height:16.25px;color:#c6c6c6;font-weight:400;letter-spacing:0.25px">for system=splunktshrtcompany-1</div>
<div style="position:absolute;left:696.3px;top:740.65px;width:100px;height:27px;background:#0b2c24;border-radius:2px"></div>
<svg style="position:absolute;left:705px;top:745.15px;" width="18" height="18" viewBox="0 0 18 18"><circle cx="9" cy="9" r="5.3" stroke="#4cc4a3" stroke-width="2.1" fill="none"/><path d="M9 1.6V3.6M9 14.4V16.4M1.6 9H3.6M14.4 9H16.4" stroke="#4cc4a3" stroke-width="2.3" stroke-linecap="round"/></svg>
<div class="t" style="left:733.20px;top:748.35px;font-size:13px;line-height:13px;color:#4ccaa6;font-weight:400;font-family:'Liberation Mono', monospace;letter-spacing:0.1px;-webkit-text-stroke-width:0.2px">FINDING</div>
<svg style="position:absolute;left:866px;top:746.15px;" width="16" height="16" viewBox="0 0 16 16"><rect x="2.1" y="1.9" width="12" height="8.6" rx="1.8" stroke="#b4b4b4" stroke-width="1.9" fill="none"/><path d="M6.8 11.2V14.2M9.4 11.2V14.2" stroke="#b4b4b4" stroke-width="1.3"/><path d="M3.6 14.4H12.6" stroke="#b4b4b4" stroke-width="1.4"/></svg>
<div class="t" style="left:893.20px;top:745.75px;font-size:16.1px;line-height:16.1px;color:#c6c6c6;font-weight:400;letter-spacing:0.45px">splunktshrtcom...</div>
<div style="position:absolute;left:1044.4px;top:743.9499999999999px;width:35px;height:20.6px;background:#b8302a;border-radius:3px"></div>
<div class="t" style="left:1050.30px;top:747.25px;font-size:14.3px;line-height:14.3px;color:#f6f6f6;font-weight:400;-webkit-text-stroke-width:0.7px">250</div>
<div class="t" style="left:1216.50px;top:745.75px;font-size:16.1px;line-height:16.1px;color:#3f8fea;font-weight:400;">4</div>
<div class="t" style="left:1278.70px;top:745.75px;font-size:16.1px;line-height:16.1px;color:#c6c6c6;font-weight:400;">Today, 3:12 PM</div>
<div class="t" style="left:1472.90px;top:745.75px;font-size:16.1px;line-height:16.1px;color:#c6c6c6;font-weight:400;letter-spacing:0.3px">Undetermined</div>
<div style="position:absolute;left:1715.5px;top:749.35px;width:9.6px;height:9.6px;background:#e52b2b;border-radius:50%"></div>
<div class="t" style="left:1733.60px;top:745.75px;font-size:16.1px;line-height:16.1px;color:#c6c6c6;font-weight:400;">High</div>
<div style="position:absolute;left:1837.2px;top:749.35px;width:9.6px;height:9.6px;background:#d62ee0;border-radius:50%"></div>
<div class="t" style="left:1855.80px;top:745.75px;font-size:16.1px;line-height:16.1px;color:#c6c6c6;font-weight:400;">In Progress</div>
<div class="t" style="left:1959.50px;top:734.15px;font-size:16.1px;line-height:16.1px;color:#c6c6c6;font-weight:400;">simon</div>
<div class="t" style="left:1959.50px;top:756.75px;font-size:16.1px;line-height:16.1px;color:#c6c6c6;font-weight:400;">geetarfunk</div>
<div style="position:absolute;left:2097.8px;top:745.25px;width:3.0px;height:3.0px;background:#a8a8a8;border-radius:50%"></div>
<div style="position:absolute;left:2097.8px;top:752.65px;width:3.0px;height:3.0px;background:#a8a8a8;border-radius:50%"></div>
<div style="position:absolute;left:2097.8px;top:760.05px;width:3.0px;height:3.0px;background:#a8a8a8;border-radius:50%"></div>
<div style="position:absolute;left:37.2px;top:803.8px;width:20.8px;height:20.8px;border:2px solid #939499;border-radius:4px;box-sizing:border-box"></div>
<div class="t" style="left:131.10px;top:794.40px;font-size:16.25px;line-height:16.25px;color:#c6c6c6;font-weight:400;letter-spacing:0.1px">24 hour risk threshold exceeded for</div>
<div class="t" style="left:131.10px;top:817.50px;font-size:16.25px;line-height:16.25px;color:#c6c6c6;font-weight:400;letter-spacing:0.25px">user=bstoll@splunktshirtcompany.com</div>
<div style="position:absolute;left:696.3px;top:800.9499999999999px;width:100px;height:27px;background:#0b2c24;border-radius:2px"></div>
<svg style="position:absolute;left:705px;top:805.4499999999999px;" width="18" height="18" viewBox="0 0 18 18"><circle cx="9" cy="9" r="5.3" stroke="#4cc4a3" stroke-width="2.1" fill="none"/><path d="M9 1.6V3.6M9 14.4V16.4M1.6 9H3.6M14.4 9H16.4" stroke="#4cc4a3" stroke-width="2.3" stroke-linecap="round"/></svg>
<div class="t" style="left:733.20px;top:808.65px;font-size:13px;line-height:13px;color:#4ccaa6;font-weight:400;font-family:'Liberation Mono', monospace;letter-spacing:0.1px;-webkit-text-stroke-width:0.2px">FINDING</div>
<svg style="position:absolute;left:866.5px;top:805.9499999999999px;" width="16" height="16" viewBox="0 0 16 16"><circle cx="8" cy="5" r="3.6" stroke="#b8b8b8" stroke-width="1.8" fill="none"/><path d="M1.6 14.6c0-3.6 2.6-5.8 6.4-5.8s6.4 2.2 6.4 5.8z" stroke="#b8b8b8" stroke-width="1.8" fill="none" stroke-linejoin="round"/></svg>
<div class="t" style="left:893.20px;top:806.05px;font-size:16.1px;line-height:16.1px;color:#c6c6c6;font-weight:400;letter-spacing:0.45px">bstoll@splunkt...</div>
<div style="position:absolute;left:1044.4px;top:804.2499999999999px;width:35px;height:20.6px;background:#b8302a;border-radius:3px"></div>
<div class="t" style="left:1050.30px;top:807.55px;font-size:14.3px;line-height:14.3px;color:#f6f6f6;font-weight:400;-webkit-text-stroke-width:0.7px">306</div>
<div class="t" style="left:1216.50px;top:806.05px;font-size:16.1px;line-height:16.1px;color:#3f8fea;font-weight:400;">5</div>
<div class="t" style="left:1278.70px;top:806.05px;font-size:16.1px;line-height:16.1px;color:#c6c6c6;font-weight:400;">Today, 3:32 PM</div>
<div class="t" style="left:1472.90px;top:806.05px;font-size:16.1px;line-height:16.1px;color:#c6c6c6;font-weight:400;letter-spacing:0.3px">Undetermined</div>
<div style="position:absolute;left:1715.5px;top:809.65px;width:9.6px;height:9.6px;background:#f5a020;border-radius:50%"></div>
<div class="t" style="left:1733.60px;top:806.05px;font-size:16.1px;line-height:16.1px;color:#c6c6c6;font-weight:400;">Medium</div>
<div style="position:absolute;left:1837.2px;top:809.65px;width:9.6px;height:9.6px;background:#d62ee0;border-radius:50%"></div>
<div class="t" style="left:1855.80px;top:806.05px;font-size:16.1px;line-height:16.1px;color:#c6c6c6;font-weight:400;">In Progress</div>
<div class="t" style="left:1959.50px;top:806.05px;font-size:16.1px;line-height:16.1px;color:#c6c6c6;font-weight:400;">unassigned</div>
<div style="position:absolute;left:2097.8px;top:805.55px;width:3.0px;height:3.0px;background:#a8a8a8;border-radius:50%"></div>
<div style="position:absolute;left:2097.8px;top:812.9499999999999px;width:3.0px;height:3.0px;background:#a8a8a8;border-radius:50%"></div>
<div style="position:absolute;left:2097.8px;top:820.3499999999999px;width:3.0px;height:3.0px;background:#a8a8a8;border-radius:50%"></div>
<div style="position:absolute;left:37.2px;top:864.0999999999999px;width:20.8px;height:20.8px;border:2px solid #939499;border-radius:4px;box-sizing:border-box"></div>
<div class="t" style="left:131.10px;top:854.70px;font-size:16.25px;line-height:16.25px;color:#c6c6c6;font-weight:400;letter-spacing:0.1px">24 hour risk threshold exceeded for system=mvalitus-</div>
<div class="t" style="left:131.10px;top:877.80px;font-size:16.25px;line-height:16.25px;color:#c6c6c6;font-weight:400;letter-spacing:0.25px">l.splunktshirtcompany.com</div>
<div style="position:absolute;left:696.3px;top:861.2499999999999px;width:100px;height:27px;background:#0b2c24;border-radius:2px"></div>
<svg style="position:absolute;left:705px;top:865.7499999999999px;" width="18" height="18" viewBox="0 0 18 18"><circle cx="9" cy="9" r="5.3" stroke="#4cc4a3" stroke-width="2.1" fill="none"/><path d="M9 1.6V3.6M9 14.4V16.4M1.6 9H3.6M14.4 9H16.4" stroke="#4cc4a3" stroke-width="2.3" stroke-linecap="round"/></svg>
<div class="t" style="left:733.20px;top:868.95px;font-size:13px;line-height:13px;color:#4ccaa6;font-weight:400;font-family:'Liberation Mono', monospace;letter-spacing:0.1px;-webkit-text-stroke-width:0.2px">FINDING</div>
<svg style="position:absolute;left:866px;top:866.7499999999999px;" width="16" height="16" viewBox="0 0 16 16"><rect x="2.1" y="1.9" width="12" height="8.6" rx="1.8" stroke="#b4b4b4" stroke-width="1.9" fill="none"/><path d="M6.8 11.2V14.2M9.4 11.2V14.2" stroke="#b4b4b4" stroke-width="1.3"/><path d="M3.6 14.4H12.6" stroke="#b4b4b4" stroke-width="1.4"/></svg>
<div class="t" style="left:893.20px;top:866.35px;font-size:16.1px;line-height:16.1px;color:#c6c6c6;font-weight:400;letter-spacing:0.45px">mvalitus-l.splun...</div>
<div style="position:absolute;left:1044.4px;top:864.5499999999998px;width:35px;height:20.6px;background:#b8302a;border-radius:3px"></div>
<div class="t" style="left:1050.30px;top:867.85px;font-size:14.3px;line-height:14.3px;color:#f6f6f6;font-weight:400;-webkit-text-stroke-width:0.7px">381</div>
<div class="t" style="left:1216.50px;top:866.35px;font-size:16.1px;line-height:16.1px;color:#3f8fea;font-weight:400;">6</div>
<div class="t" style="left:1278.70px;top:866.35px;font-size:16.1px;line-height:16.1px;color:#c6c6c6;font-weight:400;">Today, 3:32 PM</div>
<div class="t" style="left:1472.90px;top:866.35px;font-size:16.1px;line-height:16.1px;color:#c6c6c6;font-weight:400;letter-spacing:0.3px">Undetermined</div>
<div style="position:absolute;left:1715.5px;top:869.9499999999999px;width:9.6px;height:9.6px;background:#f5a020;border-radius:50%"></div>
<div class="t" style="left:1733.60px;top:866.35px;font-size:16.1px;line-height:16.1px;color:#c6c6c6;font-weight:400;">Medium</div>
<div style="position:absolute;left:1837.2px;top:869.9499999999999px;width:9.6px;height:9.6px;background:#d62ee0;border-radius:50%"></div>
<div class="t" style="left:1855.80px;top:866.35px;font-size:16.1px;line-height:16.1px;color:#c6c6c6;font-weight:400;">In Progress</div>
<div class="t" style="left:1959.50px;top:866.35px;font-size:16.1px;line-height:16.1px;color:#c6c6c6;font-weight:400;">unassigned</div>
<div style="position:absolute;left:2097.8px;top:865.8499999999999px;width:3.0px;height:3.0px;background:#a8a8a8;border-radius:50%"></div>
<div style="position:absolute;left:2097.8px;top:873.2499999999999px;width:3.0px;height:3.0px;background:#a8a8a8;border-radius:50%"></div>
<div style="position:absolute;left:2097.8px;top:880.6499999999999px;width:3.0px;height:3.0px;background:#a8a8a8;border-radius:50%"></div>
<div style="position:absolute;left:37.2px;top:924.3999999999999px;width:20.8px;height:20.8px;border:2px solid #939499;border-radius:4px;box-sizing:border-box"></div>
<div class="t" style="left:131.10px;top:915.00px;font-size:16.25px;line-height:16.25px;color:#c6c6c6;font-weight:400;letter-spacing:0.1px">24 hour risk threshold exceeded for system=FYODOR-</div>
<div class="t" style="left:131.10px;top:938.10px;font-size:16.25px;line-height:16.25px;color:#c6c6c6;font-weight:400;letter-spacing:0.25px">L.splunktshirtcompany.com</div>
<div style="position:absolute;left:696.3px;top:921.5499999999998px;width:100px;height:27px;background:#0b2c24;border-radius:2px"></div>
<svg style="position:absolute;left:705px;top:926.0499999999998px;" width="18" height="18" viewBox="0 0 18 18"><circle cx="9" cy="9" r="5.3" stroke="#4cc4a3" stroke-width="2.1" fill="none"/><path d="M9 1.6V3.6M9 14.4V16.4M1.6 9H3.6M14.4 9H16.4" stroke="#4cc4a3" stroke-width="2.3" stroke-linecap="round"/></svg>
<div class="t" style="left:733.20px;top:929.25px;font-size:13px;line-height:13px;color:#4ccaa6;font-weight:400;font-family:'Liberation Mono', monospace;letter-spacing:0.1px;-webkit-text-stroke-width:0.2px">FINDING</div>
<svg style="position:absolute;left:866px;top:927.0499999999998px;" width="16" height="16" viewBox="0 0 16 16"><rect x="2.1" y="1.9" width="12" height="8.6" rx="1.8" stroke="#b4b4b4" stroke-width="1.9" fill="none"/><path d="M6.8 11.2V14.2M9.4 11.2V14.2" stroke="#b4b4b4" stroke-width="1.3"/><path d="M3.6 14.4H12.6" stroke="#b4b4b4" stroke-width="1.4"/></svg>
<div class="t" style="left:893.20px;top:926.65px;font-size:16.1px;line-height:16.1px;color:#c6c6c6;font-weight:400;letter-spacing:0.45px">FYODOR-L.splu...</div>
<div style="position:absolute;left:1044.4px;top:924.8499999999998px;width:35px;height:20.6px;background:#b8302a;border-radius:3px"></div>
<div class="t" style="left:1050.30px;top:928.15px;font-size:14.3px;line-height:14.3px;color:#f6f6f6;font-weight:400;-webkit-text-stroke-width:0.7px">370</div>
<div class="t" style="left:1216.50px;top:926.65px;font-size:16.1px;line-height:16.1px;color:#3f8fea;font-weight:400;">6</div>
<div class="t" style="left:1278.70px;top:926.65px;font-size:16.1px;line-height:16.1px;color:#c6c6c6;font-weight:400;">Today, 5:17 PM</div>
<div class="t" style="left:1472.90px;top:926.65px;font-size:16.1px;line-height:16.1px;color:#c6c6c6;font-weight:400;letter-spacing:0.3px">Undetermined</div>
<div style="position:absolute;left:1715.5px;top:930.2499999999999px;width:9.6px;height:9.6px;background:#b8302a;border-radius:50%"></div>
<div class="t" style="left:1733.60px;top:926.65px;font-size:16.1px;line-height:16.1px;color:#c6c6c6;font-weight:400;">Critical</div>
<div style="position:absolute;left:1837.2px;top:930.2499999999999px;width:9.6px;height:9.6px;background:#2ea68c;border-radius:50%"></div>
<div class="t" style="left:1855.80px;top:926.65px;font-size:16.1px;line-height:16.1px;color:#c6c6c6;font-weight:400;">Resolved</div>
<div class="t" style="left:1959.50px;top:926.65px;font-size:16.1px;line-height:16.1px;color:#c6c6c6;font-weight:400;">lily thomson</div>
<div style="position:absolute;left:2097.8px;top:926.1499999999999px;width:3.0px;height:3.0px;background:#a8a8a8;border-radius:50%"></div>
<div style="position:absolute;left:2097.8px;top:933.5499999999998px;width:3.0px;height:3.0px;background:#a8a8a8;border-radius:50%"></div>
<div style="position:absolute;left:2097.8px;top:940.9499999999998px;width:3.0px;height:3.0px;background:#a8a8a8;border-radius:50%"></div>
<div style="position:absolute;left:37.2px;top:984.6999999999998px;width:20.8px;height:20.8px;border:2px solid #939499;border-radius:4px;box-sizing:border-box"></div>
<div class="t" style="left:131.10px;top:975.30px;font-size:16.25px;line-height:16.25px;color:#c6c6c6;font-weight:400;letter-spacing:0.1px">24 hour risk threshold exceeded for</div>
<div class="t" style="left:131.10px;top:998.40px;font-size:16.25px;line-height:16.25px;color:#c6c6c6;font-weight:400;letter-spacing:0.25px">system=172.16.0.145</div>
<div style="position:absolute;left:696.3px;top:981.8499999999998px;width:100px;height:27px;background:#0b2c24;border-radius:2px"></div>
<svg style="position:absolute;left:705px;top:986.3499999999998px;" width="18" height="18" viewBox="0 0 18 18"><circle cx="9" cy="9" r="5.3" stroke="#4cc4a3" stroke-width="2.1" fill="none"/><path d="M9 1.6V3.6M9 14.4V16.4M1.6 9H3.6M14.4 9H16.4" stroke="#4cc4a3" stroke-width="2.3" stroke-linecap="round"/></svg>
<div class="t" style="left:733.20px;top:989.55px;font-size:13px;line-height:13px;color:#4ccaa6;font-weight:400;font-family:'Liberation Mono', monospace;letter-spacing:0.1px;-webkit-text-stroke-width:0.2px">FINDING</div>
<svg style="position:absolute;left:866px;top:987.3499999999998px;" width="16" height="16" viewBox="0 0 16 16"><rect x="2.1" y="1.9" width="12" height="8.6" rx="1.8" stroke="#b4b4b4" stroke-width="1.9" fill="none"/><path d="M6.8 11.2V14.2M9.4 11.2V14.2" stroke="#b4b4b4" stroke-width="1.3"/><path d="M3.6 14.4H12.6" stroke="#b4b4b4" stroke-width="1.4"/></svg>
<div class="t" style="left:893.20px;top:986.95px;font-size:16.1px;line-height:16.1px;color:#c6c6c6;font-weight:400;">172.16.0.145</div>
<div style="position:absolute;left:1044.4px;top:985.1499999999997px;width:35px;height:20.6px;background:#b8302a;border-radius:3px"></div>
<div class="t" style="left:1050.30px;top:988.45px;font-size:14.3px;line-height:14.3px;color:#f6f6f6;font-weight:400;-webkit-text-stroke-width:0.7px">160</div>
<div class="t" style="left:1216.50px;top:986.95px;font-size:16.1px;line-height:16.1px;color:#3f8fea;font-weight:400;">2</div>
<div class="t" style="left:1278.70px;top:986.95px;font-size:16.1px;line-height:16.1px;color:#c6c6c6;font-weight:400;">Today, 6:47 PM</div>
<div class="t" style="left:1472.90px;top:986.95px;font-size:16.1px;line-height:16.1px;color:#c6c6c6;font-weight:400;letter-spacing:0.3px">Undetermined</div>
<div style="position:absolute;left:1715.5px;top:990.5499999999998px;width:9.6px;height:9.6px;background:#e52b2b;border-radius:50%"></div>
<div class="t" style="left:1733.60px;top:986.95px;font-size:16.1px;line-height:16.1px;color:#c6c6c6;font-weight:400;">High</div>
<div style="position:absolute;left:1837.2px;top:990.5499999999998px;width:9.6px;height:9.6px;background:#2ea68c;border-radius:50%"></div>
<div class="t" style="left:1855.80px;top:986.95px;font-size:16.1px;line-height:16.1px;color:#c6c6c6;font-weight:400;">Resolved</div>
<div class="t" style="left:1959.50px;top:975.35px;font-size:16.1px;line-height:16.1px;color:#c6c6c6;font-weight:400;">simon</div>
<div class="t" style="left:1959.50px;top:997.95px;font-size:16.1px;line-height:16.1px;color:#c6c6c6;font-weight:400;">geetarfunk</div>
<div style="position:absolute;left:2097.8px;top:986.4499999999998px;width:3.0px;height:3.0px;background:#a8a8a8;border-radius:50%"></div>
<div style="position:absolute;left:2097.8px;top:993.8499999999998px;width:3.0px;height:3.0px;background:#a8a8a8;border-radius:50%"></div>
<div style="position:absolute;left:2097.8px;top:1001.2499999999998px;width:3.0px;height:3.0px;background:#a8a8a8;border-radius:50%"></div>
<div style="position:absolute;left:37.2px;top:1044.9999999999998px;width:20.8px;height:20.8px;border:2px solid #939499;border-radius:4px;box-sizing:border-box"></div>
<div class="t" style="left:131.10px;top:1042.55px;font-size:16.25px;line-height:16.25px;color:#c6c6c6;font-weight:400;letter-spacing:0.1px">24 hour risk threshold exceeded for system=172.16.0.13</div>
<div style="position:absolute;left:696.3px;top:1037.5499999999997px;width:100px;height:27px;background:#0b2c24;border-radius:2px"></div>
<svg style="position:absolute;left:705px;top:1042.0499999999997px;" width="18" height="18" viewBox="0 0 18 18"><circle cx="9" cy="9" r="5.3" stroke="#4cc4a3" stroke-width="2.1" fill="none"/><path d="M9 1.6V3.6M9 14.4V16.4M1.6 9H3.6M14.4 9H16.4" stroke="#4cc4a3" stroke-width="2.3" stroke-linecap="round"/></svg>
<div class="t" style="left:733.20px;top:1045.25px;font-size:13px;line-height:13px;color:#4ccaa6;font-weight:400;font-family:'Liberation Mono', monospace;letter-spacing:0.1px;-webkit-text-stroke-width:0.2px">FINDING</div>
<svg style="position:absolute;left:866px;top:1043.0499999999997px;" width="16" height="16" viewBox="0 0 16 16"><rect x="2.1" y="1.9" width="12" height="8.6" rx="1.8" stroke="#b4b4b4" stroke-width="1.9" fill="none"/><path d="M6.8 11.2V14.2M9.4 11.2V14.2" stroke="#b4b4b4" stroke-width="1.3"/><path d="M3.6 14.4H12.6" stroke="#b4b4b4" stroke-width="1.4"/></svg>
<div class="t" style="left:893.20px;top:1042.65px;font-size:16.1px;line-height:16.1px;color:#c6c6c6;font-weight:400;">172.16.0.13</div>
<div style="position:absolute;left:1044.4px;top:1040.8499999999997px;width:35px;height:20.6px;background:#b8302a;border-radius:3px"></div>
<div class="t" style="left:1050.30px;top:1044.15px;font-size:14.3px;line-height:14.3px;color:#f6f6f6;font-weight:400;-webkit-text-stroke-width:0.7px">160</div>
<div class="t" style="left:1216.50px;top:1042.65px;font-size:16.1px;line-height:16.1px;color:#3f8fea;font-weight:400;">2</div>
<div class="t" style="left:1278.70px;top:1042.65px;font-size:16.1px;line-height:16.1px;color:#c6c6c6;font-weight:400;">Today, 6:47 PM</div>
<div class="t" style="left:1472.90px;top:1042.65px;font-size:16.1px;line-height:16.1px;color:#c6c6c6;font-weight:400;letter-spacing:0.3px">Undetermined</div>
<div style="position:absolute;left:1715.5px;top:1046.2499999999998px;width:9.6px;height:9.6px;background:#b8302a;border-radius:50%"></div>
<div class="t" style="left:1733.60px;top:1042.65px;font-size:16.1px;line-height:16.1px;color:#c6c6c6;font-weight:400;">Critical</div>
<div style="position:absolute;left:1837.2px;top:1046.2499999999998px;width:9.6px;height:9.6px;background:#2ea68c;border-radius:50%"></div>
<div class="t" style="left:1855.80px;top:1042.65px;font-size:16.1px;line-height:16.1px;color:#c6c6c6;font-weight:400;">Resolved</div>
<div class="t" style="left:1959.50px;top:1042.65px;font-size:16.1px;line-height:16.1px;color:#c6c6c6;font-weight:400;">lily thomson</div>
<div style="position:absolute;left:2097.8px;top:1042.1499999999996px;width:3.0px;height:3.0px;background:#a8a8a8;border-radius:50%"></div>
<div style="position:absolute;left:2097.8px;top:1049.5499999999997px;width:3.0px;height:3.0px;background:#a8a8a8;border-radius:50%"></div>
<div style="position:absolute;left:2097.8px;top:1056.9499999999998px;width:3.0px;height:3.0px;background:#a8a8a8;border-radius:50%"></div>
<div style="position:absolute;left:37.2px;top:1096.0999999999997px;width:20.8px;height:20.8px;border:2px solid #939499;border-radius:4px;box-sizing:border-box"></div>
<div class="t" style="left:131.10px;top:1086.70px;font-size:16.25px;line-height:16.25px;color:#c6c6c6;font-weight:400;letter-spacing:0.1px">24 hour risk threshold exceeded for</div>
<div class="t" style="left:131.10px;top:1109.80px;font-size:16.25px;line-height:16.25px;color:#c6c6c6;font-weight:400;letter-spacing:0.25px">system=54.230.147.59</div>
<div style="position:absolute;left:696.3px;top:1093.2499999999998px;width:100px;height:27px;background:#0b2c24;border-radius:2px"></div>
<svg style="position:absolute;left:705px;top:1097.7499999999998px;" width="18" height="18" viewBox="0 0 18 18"><circle cx="9" cy="9" r="5.3" stroke="#4cc4a3" stroke-width="2.1" fill="none"/><path d="M9 1.6V3.6M9 14.4V16.4M1.6 9H3.6M14.4 9H16.4" stroke="#4cc4a3" stroke-width="2.3" stroke-linecap="round"/></svg>
<div class="t" style="left:733.20px;top:1100.95px;font-size:13px;line-height:13px;color:#4ccaa6;font-weight:400;font-family:'Liberation Mono', monospace;letter-spacing:0.1px;-webkit-text-stroke-width:0.2px">FINDING</div>
<svg style="position:absolute;left:866px;top:1098.7499999999998px;" width="16" height="16" viewBox="0 0 16 16"><rect x="2.1" y="1.9" width="12" height="8.6" rx="1.8" stroke="#b4b4b4" stroke-width="1.9" fill="none"/><path d="M6.8 11.2V14.2M9.4 11.2V14.2" stroke="#b4b4b4" stroke-width="1.3"/><path d="M3.6 14.4H12.6" stroke="#b4b4b4" stroke-width="1.4"/></svg>
<div class="t" style="left:893.20px;top:1098.35px;font-size:16.1px;line-height:16.1px;color:#c6c6c6;font-weight:400;">54.230.147.59</div>
<div style="position:absolute;left:1044.4px;top:1096.5499999999997px;width:35px;height:20.6px;background:#b8302a;border-radius:3px"></div>
<div class="t" style="left:1050.30px;top:1099.85px;font-size:14.3px;line-height:14.3px;color:#f6f6f6;font-weight:400;-webkit-text-stroke-width:0.7px">160</div>
<div class="t" style="left:1216.50px;top:1098.35px;font-size:16.1px;line-height:16.1px;color:#3f8fea;font-weight:400;">2</div>
<div class="t" style="left:1278.70px;top:1098.35px;font-size:16.1px;line-height:16.1px;color:#c6c6c6;font-weight:400;">Today, 6:47 PM</div>
<div class="t" style="left:1472.90px;top:1098.35px;font-size:16.1px;line-height:16.1px;color:#c6c6c6;font-weight:400;letter-spacing:0.3px">Undetermined</div>
<div style="position:absolute;left:1715.5px;top:1101.9499999999998px;width:9.6px;height:9.6px;background:#e52b2b;border-radius:50%"></div>
<div class="t" style="left:1733.60px;top:1098.35px;font-size:16.1px;line-height:16.1px;color:#c6c6c6;font-weight:400;">High</div>
<div style="position:absolute;left:1837.2px;top:1101.9499999999998px;width:9.6px;height:9.6px;background:#a3e04a;border-radius:50%"></div>
<div class="t" style="left:1855.80px;top:1098.35px;font-size:16.1px;line-height:16.1px;color:#c6c6c6;font-weight:400;">Pending</div>
<div class="t" style="left:1959.50px;top:1086.75px;font-size:16.1px;line-height:16.1px;color:#c6c6c6;font-weight:400;">simon</div>
<div class="t" style="left:1959.50px;top:1109.35px;font-size:16.1px;line-height:16.1px;color:#c6c6c6;font-weight:400;">geetarfunk</div>
<div style="position:absolute;left:2097.8px;top:1097.8499999999997px;width:3.0px;height:3.0px;background:#a8a8a8;border-radius:50%"></div>
<div style="position:absolute;left:2097.8px;top:1105.2499999999998px;width:3.0px;height:3.0px;background:#a8a8a8;border-radius:50%"></div>
<div style="position:absolute;left:2097.8px;top:1112.6499999999999px;width:3.0px;height:3.0px;background:#a8a8a8;border-radius:50%"></div>
<div style="position:absolute;left:37.2px;top:1156.3999999999996px;width:20.8px;height:20.8px;border:2px solid #939499;border-radius:4px;box-sizing:border-box"></div>
<div class="t" style="left:131.10px;top:1147.00px;font-size:16.25px;line-height:16.25px;color:#c6c6c6;font-weight:400;letter-spacing:0.1px">24 hour risk threshold exceeded for</div>
<div class="t" style="left:131.10px;top:1170.10px;font-size:16.25px;line-height:16.25px;color:#c6c6c6;font-weight:400;letter-spacing:0.25px">system=54.230.147.47</div>
<div style="position:absolute;left:696.3px;top:1153.5499999999997px;width:100px;height:27px;background:#0b2c24;border-radius:2px"></div>
<svg style="position:absolute;left:705px;top:1158.0499999999997px;" width="18" height="18" viewBox="0 0 18 18"><circle cx="9" cy="9" r="5.3" stroke="#4cc4a3" stroke-width="2.1" fill="none"/><path d="M9 1.6V3.6M9 14.4V16.4M1.6 9H3.6M14.4 9H16.4" stroke="#4cc4a3" stroke-width="2.3" stroke-linecap="round"/></svg>
<div class="t" style="left:733.20px;top:1161.25px;font-size:13px;line-height:13px;color:#4ccaa6;font-weight:400;font-family:'Liberation Mono', monospace;letter-spacing:0.1px;-webkit-text-stroke-width:0.2px">FINDING</div>
<svg style="position:absolute;left:866px;top:1159.0499999999997px;" width="16" height="16" viewBox="0 0 16 16"><rect x="2.1" y="1.9" width="12" height="8.6" rx="1.8" stroke="#b4b4b4" stroke-width="1.9" fill="none"/><path d="M6.8 11.2V14.2M9.4 11.2V14.2" stroke="#b4b4b4" stroke-width="1.3"/><path d="M3.6 14.4H12.6" stroke="#b4b4b4" stroke-width="1.4"/></svg>
<div class="t" style="left:893.20px;top:1158.65px;font-size:16.1px;line-height:16.1px;color:#c6c6c6;font-weight:400;">54.230.147.47</div>
<div style="position:absolute;left:1044.4px;top:1156.8499999999997px;width:35px;height:20.6px;background:#b8302a;border-radius:3px"></div>
<div class="t" style="left:1050.30px;top:1160.15px;font-size:14.3px;line-height:14.3px;color:#f6f6f6;font-weight:400;-webkit-text-stroke-width:0.7px">160</div>
<div class="t" style="left:1216.50px;top:1158.65px;font-size:16.1px;line-height:16.1px;color:#3f8fea;font-weight:400;">2</div>
<div class="t" style="left:1278.70px;top:1158.65px;font-size:16.1px;line-height:16.1px;color:#c6c6c6;font-weight:400;">Today, 6:47 PM</div>
<div class="t" style="left:1472.90px;top:1158.65px;font-size:16.1px;line-height:16.1px;color:#c6c6c6;font-weight:400;letter-spacing:0.3px">Undetermined</div>
<div style="position:absolute;left:1715.5px;top:1162.2499999999998px;width:9.6px;height:9.6px;background:#e52b2b;border-radius:50%"></div>
<div class="t" style="left:1733.60px;top:1158.65px;font-size:16.1px;line-height:16.1px;color:#c6c6c6;font-weight:400;">High</div>
<div style="position:absolute;left:1837.2px;top:1162.2499999999998px;width:9.6px;height:9.6px;background:#a3e04a;border-radius:50%"></div>
<div class="t" style="left:1855.80px;top:1158.65px;font-size:16.1px;line-height:16.1px;color:#c6c6c6;font-weight:400;">Pending</div>
<div class="t" style="left:1959.50px;top:1147.05px;font-size:16.1px;line-height:16.1px;color:#c6c6c6;font-weight:400;">simon</div>
<div class="t" style="left:1959.50px;top:1169.65px;font-size:16.1px;line-height:16.1px;color:#c6c6c6;font-weight:400;">geetarfunk</div>
<div style="position:absolute;left:2097.8px;top:1158.1499999999996px;width:3.0px;height:3.0px;background:#a8a8a8;border-radius:50%"></div>
<div style="position:absolute;left:2097.8px;top:1165.5499999999997px;width:3.0px;height:3.0px;background:#a8a8a8;border-radius:50%"></div>
<div style="position:absolute;left:2097.8px;top:1172.9499999999998px;width:3.0px;height:3.0px;background:#a8a8a8;border-radius:50%"></div>
<div style="position:absolute;left:23px;top:1197.1999999999996px;width:2170.5px;height:50.80000000000041px;background:#313234"></div>
<div style="position:absolute;left:37.2px;top:1216.6999999999996px;width:20.8px;height:20.8px;border:2px solid #939499;border-radius:4px;box-sizing:border-box"></div>
<div class="t" style="left:131.10px;top:1207.30px;font-size:16.25px;line-height:16.25px;color:#c6c6c6;font-weight:400;letter-spacing:0.1px">24 hour risk threshold exceeded for</div>
<div class="t" style="left:131.10px;top:1230.40px;font-size:16.25px;line-height:16.25px;color:#c6c6c6;font-weight:400;letter-spacing:0.25px">system=52.84.235.102</div>
<div style="position:absolute;left:696.3px;top:1213.8499999999997px;width:100px;height:27px;background:#0b2c24;border-radius:2px"></div>
<svg style="position:absolute;left:705px;top:1218.3499999999997px;" width="18" height="18" viewBox="0 0 18 18"><circle cx="9" cy="9" r="5.3" stroke="#4cc4a3" stroke-width="2.1" fill="none"/><path d="M9 1.6V3.6M9 14.4V16.4M1.6 9H3.6M14.4 9H16.4" stroke="#4cc4a3" stroke-width="2.3" stroke-linecap="round"/></svg>
<div class="t" style="left:733.20px;top:1221.55px;font-size:13px;line-height:13px;color:#4ccaa6;font-weight:400;font-family:'Liberation Mono', monospace;letter-spacing:0.1px;-webkit-text-stroke-width:0.2px">FINDING</div>
<svg style="position:absolute;left:866px;top:1219.3499999999997px;" width="16" height="16" viewBox="0 0 16 16"><rect x="2.1" y="1.9" width="12" height="8.6" rx="1.8" stroke="#b4b4b4" stroke-width="1.9" fill="none"/><path d="M6.8 11.2V14.2M9.4 11.2V14.2" stroke="#b4b4b4" stroke-width="1.3"/><path d="M3.6 14.4H12.6" stroke="#b4b4b4" stroke-width="1.4"/></svg>
<div class="t" style="left:893.20px;top:1218.95px;font-size:16.1px;line-height:16.1px;color:#c6c6c6;font-weight:400;">52.84.235.102</div>
<div style="position:absolute;left:1044.4px;top:1217.1499999999996px;width:35px;height:20.6px;background:#b8302a;border-radius:3px"></div>
<div class="t" style="left:1050.30px;top:1220.45px;font-size:14.3px;line-height:14.3px;color:#f6f6f6;font-weight:400;-webkit-text-stroke-width:0.7px">160</div>
<div class="t" style="left:1216.50px;top:1218.95px;font-size:16.1px;line-height:16.1px;color:#3f8fea;font-weight:400;">2</div>
<div class="t" style="left:1278.70px;top:1218.95px;font-size:16.1px;line-height:16.1px;color:#c6c6c6;font-weight:400;">Today, 6:47 PM</div>
<div class="t" style="left:1472.90px;top:1218.95px;font-size:16.1px;line-height:16.1px;color:#c6c6c6;font-weight:400;letter-spacing:0.3px">Undetermined</div>
<div style="position:absolute;left:1715.5px;top:1222.5499999999997px;width:9.6px;height:9.6px;background:#9a2e2a;border-radius:50%"></div>
<div class="t" style="left:1733.60px;top:1218.95px;font-size:16.1px;line-height:16.1px;color:#c6c6c6;font-weight:400;">Critical</div>
<div style="position:absolute;left:1837.2px;top:1222.5499999999997px;width:9.6px;height:9.6px;background:#a3e04a;border-radius:50%"></div>
<div class="t" style="left:1855.80px;top:1218.95px;font-size:16.1px;line-height:16.1px;color:#c6c6c6;font-weight:400;">Pending</div>
<div class="t" style="left:1959.50px;top:1218.95px;font-size:16.1px;line-height:16.1px;color:#c6c6c6;font-weight:400;">lily thomson</div>
<div style="position:absolute;left:2097.8px;top:1218.4499999999996px;width:3.0px;height:3.0px;background:#a8a8a8;border-radius:50%"></div>
<div style="position:absolute;left:2097.8px;top:1225.8499999999997px;width:3.0px;height:3.0px;background:#a8a8a8;border-radius:50%"></div>
<div style="position:absolute;left:2097.8px;top:1233.2499999999998px;width:3.0px;height:3.0px;background:#a8a8a8;border-radius:50%"></div>
<div style="position:absolute;left:0px;top:0px;width:1.6px;height:1248px;background:rgba(255,255,255,0.11)"></div>
</div></body></html>
